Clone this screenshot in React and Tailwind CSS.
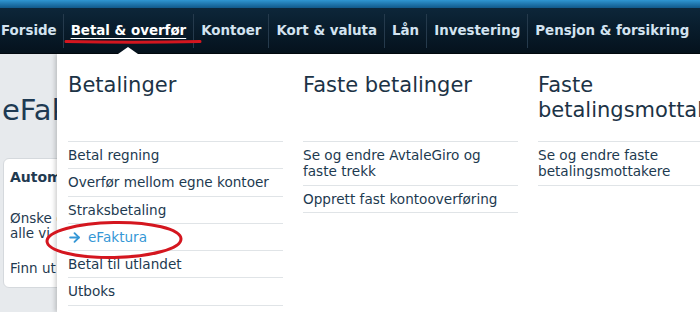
import { ArrowRight } from 'lucide-react'

/* ─── Data ─────────────────────────────────────────────────────────────── */
const navItems = ['Forside', 'Betal & overfør', 'Kontoer', 'Kort & valuta', 'Lån', 'Investering', 'Pensjon & forsikring']

const columns = [
  {
    title: 'Betalinger',
    links: ['Betal regning', 'Overfør mellom egne kontoer', 'Straksbetaling', 'eFaktura', 'Betal til utlandet', 'Utboks'],
  },
  {
    title: 'Faste betalinger',
    links: ['Se og endre AvtaleGiro og faste trekk', 'Opprett fast kontooverføring'],
  },
  {
    title: 'Faste betalingsmottakere',
    links: ['Se og endre faste betalingsmottakere'],
  },
]

/* ─── TopNav ───────────────────────────────────────────────────────────── */
function TopNav() {
  return (
    <div className="h-[54px] bg-gradient-to-b from-[#0f2a3f] to-[#05121d] border-b border-[#02090f]">
      <div className="h-[8px] bg-gradient-to-b from-[#2f96d2] to-[#11588a]" />
      <nav className="flex h-[46px] items-center whitespace-nowrap">
        {navItems.map((item, i) => (
          <div
            key={item}
            className={`flex h-[34px] shrink-0 items-center ${i === 0 ? 'pl-[1px] pr-[6px]' : 'px-[7px] border-l border-[#253a4c]'}`}
          >
            <span
              className={`text-[13.4px] font-bold ${
                i === 1 ? 'text-white underline decoration-1 underline-offset-[3px]' : 'text-[#d3e3f0]'
              }`}
            >
              {item}
            </span>
          </div>
        ))}
      </nav>
    </div>
  )
}

/* ─── Page behind the menu ─────────────────────────────────────────────── */
function PageBehind() {
  return (
    <div className="h-[258px] bg-[#e7eaed] pl-[2px] pt-[38px]">
      <h1 className="text-[29px] leading-[36px] text-[#1e3a52]">eFaktura</h1>
      <div className="mt-[30px] ml-[1px] h-[130px] w-[200px] rounded-[6px] border border-[#d5d9dd] bg-white pl-[6px] pt-[8px] text-[13.5px] text-[#1f3a50]">
        <p className="text-[14px] font-bold">Automatisk</p>
        <p className="mt-[23px] leading-[15px]">Ønske du å<br />alle vi</p>
        <p className="mt-[17px]">Finn ut</p>
      </div>
    </div>
  )
}

/* ─── Dropdown ─────────────────────────────────────────────────────────── */
function MegaMenu() {
  return (
    <div className="absolute left-[57px] top-[54px] h-[258px] w-[660px] bg-white pl-[11px] shadow-[-2px_0_4px_rgba(0,0,0,0.18)]">
      {/* notch */}
      <div className="absolute left-[61px] top-[-7px] h-0 w-0 border-x-[10px] border-b-[7px] border-x-transparent border-b-white" />
      <div className="flex gap-[20px]">
        {columns.map((col) => (
          <div key={col.title} className="w-[215px] shrink-0">
            <h2 className="h-[87px] pt-[19px] text-[21px] leading-[25px] text-[#1c3346]">{col.title}</h2>
            <ul>
              {col.links.map((link) => (
                <li key={link} className="border-t border-[#e0e4e7] py-[5px] pr-[4px] text-[13.6px] leading-[16.3px] text-[#1d3a50]">
                  {link === 'eFaktura' ? (
                    <span className="flex items-center gap-[6px] text-[#3597d6]">
                      <ArrowRight size={15} strokeWidth={3} className="-ml-[1px]" />
                      {link}
                    </span>
                  ) : (
                    link
                  )}
                </li>
              ))}
              <li className="border-t border-[#e0e4e7]" />
            </ul>
          </div>
        ))}
      </div>
    </div>
  )
}

/* ─── App ──────────────────────────────────────────────────────────────── */
export default function App() {
  return (
    <div className="relative h-[312px] w-[700px] overflow-hidden bg-[#e7eaed] font-['DejaVu_Sans',sans-serif]">
      <TopNav />
      <PageBehind />
      <MegaMenu />

      {/* red annotation marks */}
      <svg className="pointer-events-none absolute left-0 top-0" width="700" height="312">
        <path d="M66 41.5 Q133 43 200 41.5" stroke="#d4161f" strokeWidth="3" fill="none" strokeLinecap="round" />
        <ellipse cx="114" cy="240" rx="67" ry="17.5" stroke="#d4161f" strokeWidth="3" fill="none" transform="rotate(-1 114 240)" />
      </svg>
    </div>
  )
}
